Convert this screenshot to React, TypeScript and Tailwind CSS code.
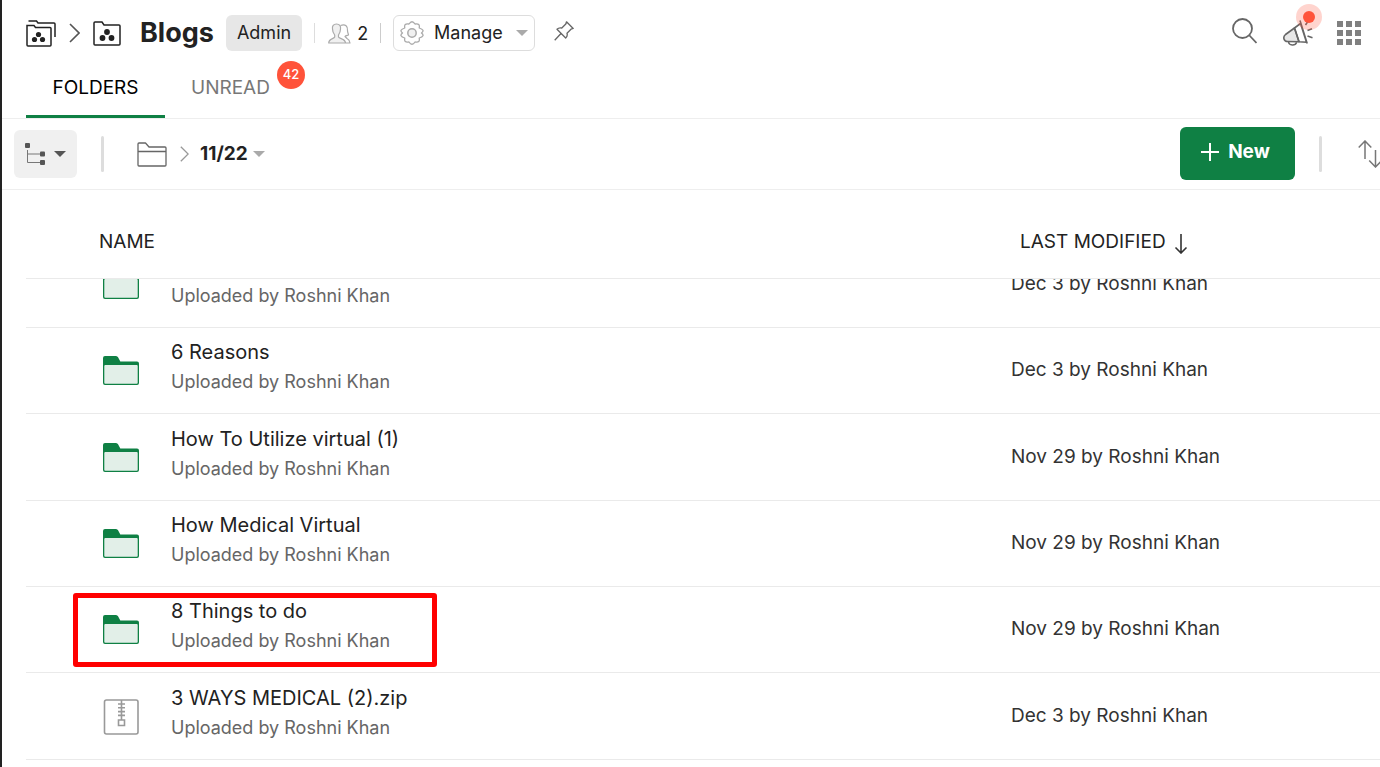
import { clsx } from "clsx";

type FileItem = {
  id: number;
  kind: "folder" | "zip";
  name?: string;
  modified: string;
  highlighted?: boolean;
};

const FILES: FileItem[] = [
  { id: 1, kind: "folder", modified: "Dec 3 by Roshni Khan" },
  { id: 2, kind: "folder", name: "6 Reasons", modified: "Dec 3 by Roshni Khan" },
  { id: 3, kind: "folder", name: "How To Utilize virtual (1)", modified: "Nov 29 by Roshni Khan" },
  { id: 4, kind: "folder", name: "How Medical Virtual", modified: "Nov 29 by Roshni Khan" },
  {
    id: 5,
    kind: "folder",
    name: "8 Things to do",
    modified: "Nov 29 by Roshni Khan",
    highlighted: true,
  },
  { id: 6, kind: "zip", name: "3 WAYS MEDICAL (2).zip", modified: "Dec 3 by Roshni Khan" },
];

export default function App() {
  return (
    <div className="min-h-screen overflow-hidden border-l-2 border-[#222] bg-white font-['Inter','Liberation_Sans',sans-serif] text-[#222]">
      <Header />
      <Tabs />
      <Toolbar />
      <FileTable />
    </div>
  );
}

const Header = () => (
  <header className="flex h-[62px] items-center pt-1 pr-[19px] pl-6">
    <a href="#teams" aria-label="Team folders">
      <TeamFoldersIcon />
    </a>
    <ChevronIcon className="mx-[13px] h-5 w-[11px] text-[#555]" />
    <TeamFolderIcon />
    <h1 className="ml-[19px] text-[27px] leading-8 font-bold">Blogs</h1>
    <span className="ml-3 flex h-9 items-center rounded-md bg-[#e7e7e7] px-[11px] pb-[2px] text-[18px]">
      Admin
    </span>
    <span className="ml-3 h-5 w-px bg-[#ddd]" />
    <button type="button" className="ml-[13px] flex items-center gap-[6px] text-[18px]">
      <MembersIcon />2
    </button>
    <span className="ml-3 h-5 w-px bg-[#ccc]" />
    <button
      type="button"
      className="ml-3 flex h-9 items-center rounded-md border border-[#ddd] px-[6px] text-[18px]"
    >
      <GearIcon />
      <span className="ml-[10px] pb-px">Manage</span>
      <CaretIcon className="ml-[13px] text-[#aaa]" />
    </button>
    <button type="button" aria-label="Pin" className="ml-[19px] pb-1">
      <PinIcon />
    </button>
    <div className="ml-auto flex items-center">
      <button type="button" aria-label="Search" className="pb-1">
        <SearchIcon />
      </button>
      <button type="button" aria-label="Announcements" className="relative ml-[26px]">
        <MegaphoneIcon />
        <span className="absolute -top-[15px] -right-[9px] flex size-[26px] items-center justify-center rounded-full bg-[#ff533a]/25">
          <span className="size-3 rounded-full bg-[#ff533a]" />
        </span>
      </button>
      <button type="button" aria-label="Apps" className="ml-6">
        <AppsIcon />
      </button>
    </div>
  </header>
);

const Tabs = () => (
  <nav className="flex h-[57px] border-b border-[#eee] pl-6 text-[19px]">
    <button
      type="button"
      className="flex w-[139px] items-center justify-center border-b-3 border-[#0f8044] text-black"
    >
      FOLDERS
    </button>
    <button type="button" className="relative ml-[26px] flex items-center pb-[3px] text-[#777]">
      UNREAD
      <span className="absolute -top-px -right-[35px] flex size-7 items-center justify-center rounded-full bg-[#ff533a] text-[13px] font-medium text-white">
        42
      </span>
    </button>
  </nav>
);

const Toolbar = () => (
  <div className="flex h-[71px] items-center border-b border-[#eee] pl-3">
    <button
      type="button"
      aria-label="Tree view"
      className="flex h-12 w-[63px] items-center justify-center gap-[9px] rounded-md bg-[#f0f0f0] text-[#555]"
    >
      <TreeIcon />
      <CaretIcon />
    </button>
    <span className="ml-6 h-9 w-[3px] rounded-full bg-[#ddd]" />
    <a href="#root" aria-label="Root folder" className="ml-[33px]">
      <OpenFolderIcon />
    </a>
    <ChevronIcon className="ml-[13px] h-4 w-[9px] text-[#999]" />
    <button type="button" className="ml-[11px] flex items-center gap-[5px] text-[19px] font-bold">
      11/22
      <CaretIcon className="text-[#aaa]" />
    </button>
    <button
      type="button"
      className="mb-[2px] ml-auto flex h-[53px] w-[115px] items-center justify-center gap-[9px] rounded-md bg-[#0f8044] pr-1 pb-[2px] text-[19px] font-bold text-white"
    >
      <svg viewBox="0 0 18 18" className="size-[18px]" stroke="currentColor" strokeWidth="2">
        <path d="M9 0v18M0 9h18" />
      </svg>
      New
    </button>
    <span className="ml-6 h-9 w-[3px] rounded-full bg-[#ddd]" />
    <button type="button" aria-label="Sort" className="ml-9">
      <SortIcon />
    </button>
  </div>
);

const FileTable = () => (
  <table className="ml-6 block">
    <thead className="block">
      <tr className="grid h-[89px] grid-cols-[1fr_369px] items-center border-b border-[#eaeaea] pt-4 text-left text-[19px]">
        <th className="pl-[73px] font-normal">NAME</th>
        <th className="pl-[9px] font-normal">
          <button type="button" className="flex items-center gap-2">
            LAST MODIFIED
            <svg
              viewBox="0 0 14 20"
              className="mt-[3px] h-5 w-[14px]"
              fill="none"
              stroke="#333"
              strokeWidth="1.6"
            >
              <path d="M7 0v19M1.5 13.5 7 19l5.5-5.5" />
            </svg>
          </button>
        </th>
      </tr>
    </thead>
    <tbody className="block">
      {FILES.map((file) => (
        <FileRow key={file.id} file={file} />
      ))}
    </tbody>
  </table>
);

const FileRow = ({ file }: { file: FileItem }) => (
  <tr
    className={clsx(
      "relative grid grid-cols-[1fr_369px] content-end border-b border-[#eaeaea]",
      // the first row is scrolled halfway under the header
      file.name ? "h-[86px] nth-[3n]:h-[87px]" : "h-[49px] overflow-hidden",
    )}
  >
    <td className="flex h-[85px] items-center pl-[77px]">
      {file.kind === "folder" ? <FolderIcon /> : <ZipIcon />}
      <div className="ml-8 pb-[7px]">
        {file.name && <div className="text-[20px] leading-[30px]">{file.name}</div>}
        <div className={clsx("text-[18px] leading-[30px] text-[#666]", !file.name && "mt-[30px]")}>
          Uploaded by Roshni Khan
        </div>
      </div>
      {file.highlighted && (
        <span className="absolute top-[6px] left-[47px] h-[74px] w-[364px] rounded-[3px] border-5 border-[#ff0000]" />
      )}
    </td>
    <td className="flex h-[85px] items-center text-[19px] text-[#333]">{file.modified}</td>
  </tr>
);

const ChevronIcon = ({ className }: { className?: string }) => (
  <svg
    viewBox="0 0 11 20"
    preserveAspectRatio="none"
    className={className}
    fill="none"
    stroke="currentColor"
    strokeWidth="1.6"
  >
    <path d="m1 1 9 9-9 9" />
  </svg>
);

const CaretIcon = ({ className }: { className?: string }) => (
  <svg viewBox="0 0 12 6" className={clsx("h-[6px] w-3", className)} fill="currentColor">
    <path d="M0 0h12L6 6z" />
  </svg>
);

const TeamFoldersIcon = () => (
  <svg viewBox="0 0 30 28" className="h-7 w-[30px]" fill="none" stroke="#222" strokeWidth="1.5">
    <path d="M1 6.5h7l1.5 2H24a1 1 0 0 1 1 1V26a1 1 0 0 1-1 1H2a1 1 0 0 1-1-1z" />
    <path d="M2.5 2h8l1.5 2h16a1 1 0 0 1 1 1v13" />
    <g fill="#222" stroke="none">
      <circle cx="12.5" cy="15.5" r="2.6" />
      <circle cx="8.5" cy="20.5" r="2.6" />
      <circle cx="16.5" cy="20.5" r="2.6" />
    </g>
  </svg>
);

const TeamFolderIcon = () => (
  <svg viewBox="0 0 28 25" className="h-[25px] w-7" fill="none" stroke="#222" strokeWidth="1.5">
    <path d="M1 2a1 1 0 0 1 1-1h7l2 3h15a1 1 0 0 1 1 1v18a1 1 0 0 1-1 1H2a1 1 0 0 1-1-1z" />
    <g fill="#222" stroke="none">
      <circle cx="14" cy="11" r="2.9" />
      <circle cx="9.5" cy="17" r="2.9" />
      <circle cx="18.5" cy="17" r="2.9" />
    </g>
  </svg>
);

const MembersIcon = () => (
  <svg
    viewBox="0 0 23 21"
    className="h-[21px] w-[23px]"
    fill="none"
    stroke="#aaa"
    strokeWidth="1.2"
    strokeLinejoin="round"
  >
    <path d="M12.5 2.5c5-2 7.5 1 7 5 0 2 1 3.500 1 4.500-1.500.5-3 .5-3.500 1.500l2 2c1.500.7 2.500 1.500 3 4.500h-4" />
    <path
      fill="#f0f0f0"
      d="M8.500 1c3 0 4.500 2 4 5 0 3-1 4.500-2 6v2c1 2 7 1.500 7 6H.7c0-4.500 5.300-4 6-6v-2c-1.200-1.500-2.200-3-2.200-6-.5-3 1-5 4-5z"
    />
  </svg>
);

const GearIcon = () => (
  <svg
    viewBox="0 0 24 24"
    className="size-6"
    fill="none"
    stroke="#aaa"
    strokeWidth="1.3"
    strokeLinejoin="round"
  >
    <path d="M9 3Q12-1.500 15 3q5.300-1.100 4.200 4Q25.500 9 21.500 12q4 3-2.300 5 1.100 5.100-4.200 4-3 4.500-6 0-5.300 1.100-4.200-4Q-1.500 15 2.500 12-1.500 9 4.800 7 3.700 1.900 9 3z" />
    <circle cx="12" cy="12" r="4.2" fill="#f0f0f0" strokeWidth="1.5" />
  </svg>
);

const PinIcon = () => (
  <svg
    viewBox="0 0 20 20"
    className="size-5"
    fill="none"
    stroke="#666"
    strokeWidth="1.3"
    strokeLinejoin="round"
  >
    <path d="M12.500.8 19.200 7.500 17 8.200l-4 4c.6 2 0 3.700-1.300 4.800L3 8.300C4.200 7 6 6.500 7.800 7l4-4zM7 12.500.7 19.300" />
  </svg>
);

const SearchIcon = () => (
  <svg viewBox="0 0 25 26" className="h-[26px] w-[25px]" fill="none" stroke="#666" strokeWidth="1.8">
    <circle cx="10.5" cy="10.5" r="9.5" />
    <path d="m17 17 7.5 8" />
  </svg>
);

const MegaphoneIcon = () => (
  <svg
    viewBox="0 0 30 28"
    className="h-7 w-[30px]"
    fill="none"
    stroke="#666"
    strokeWidth="1.6"
    strokeLinejoin="round"
  >
    <path fill="#e7e7e7" d="M11.500 9 2.500 15.500C-.5 18 .8 22.500 4.500 22.500L16 22.700z" />
    <path d="m11.500 9 6-4.500 6 18.800-7.500-.6zM17 1.500l7.200 23M5.500 23c.5 3.500 6.500 4.500 8.200.3M22.500 6l3-4.500M24.500 11.500l4.500-1.700M24.500 17l5 1.700" />
  </svg>
);

const AppsIcon = () => (
  <svg viewBox="0 0 24 24" className="size-6" fill="#808080">
    {[0, 9, 18].map((y) => (
      <path key={y} d={`M0 ${y}h6v6H0zM9 ${y}h6v6H9zM18 ${y}h6v6h-6z`} />
    ))}
  </svg>
);

const TreeIcon = () => (
  <svg viewBox="0 0 20 22" className="h-[22px] w-5" fill="none" stroke="#777" strokeWidth="1">
    <path d="M2.5 7v12.500H15M2.500 11H15" />
    <g fill="#555" stroke="none">
      <rect width="5" height="5" rx="1" />
      <rect x="15" y="8.5" width="5" height="5" rx="1" />
      <rect x="15" y="17" width="5" height="5" rx="1" />
    </g>
  </svg>
);

const OpenFolderIcon = () => (
  <svg
    viewBox="0 0 30 25"
    className="h-[25px] w-[30px]"
    fill="none"
    stroke="#666"
    strokeWidth="1.3"
    strokeLinejoin="round"
  >
    <path d="M1 2q0-1 1-1h6.500L12 5h16q1 0 1 1v17q0 1-1 1H2q-1 0-1-1zM1 9.500h28" />
  </svg>
);

const SortIcon = () => (
  <svg viewBox="0 0 22 28" className="h-7 w-[22px]" fill="none" stroke="#777" strokeWidth="1.5">
    <path d="M7 19V1M.7 7.500 7 1l6.300 6.500M17.500 10v17M11.200 20.500l6.300 6.500 6.300-6.500" />
  </svg>
);

const FolderIcon = () => (
  <svg viewBox="0 0 36 29" className="h-[29px] w-9 shrink-0">
    <path
      fill="#0f8044"
      d="M2 0h11q1.500 0 2.200 1.500L17.300 5.500H34q2 0 2 2V27q0 2-2 2H2q-2 0-2-2V2q0-2 2-2z"
    />
    <rect x="1.3" y="9" width="33.4" height="18.7" rx="1" fill="#e2efe8" />
  </svg>
);

const ZipIcon = () => (
  <svg viewBox="0 0 36 36" className="size-9 shrink-0" fill="none" stroke="#999" strokeWidth="1.6">
    <rect x="1.5" y="1" width="33.5" height="34" rx="2" />
    <path d="M18.500 1v20M15 5h7M15 8.800h7M15 12.600h7M15 16.400h7M15.500 21h6v5.500h-6z" />
  </svg>
);
